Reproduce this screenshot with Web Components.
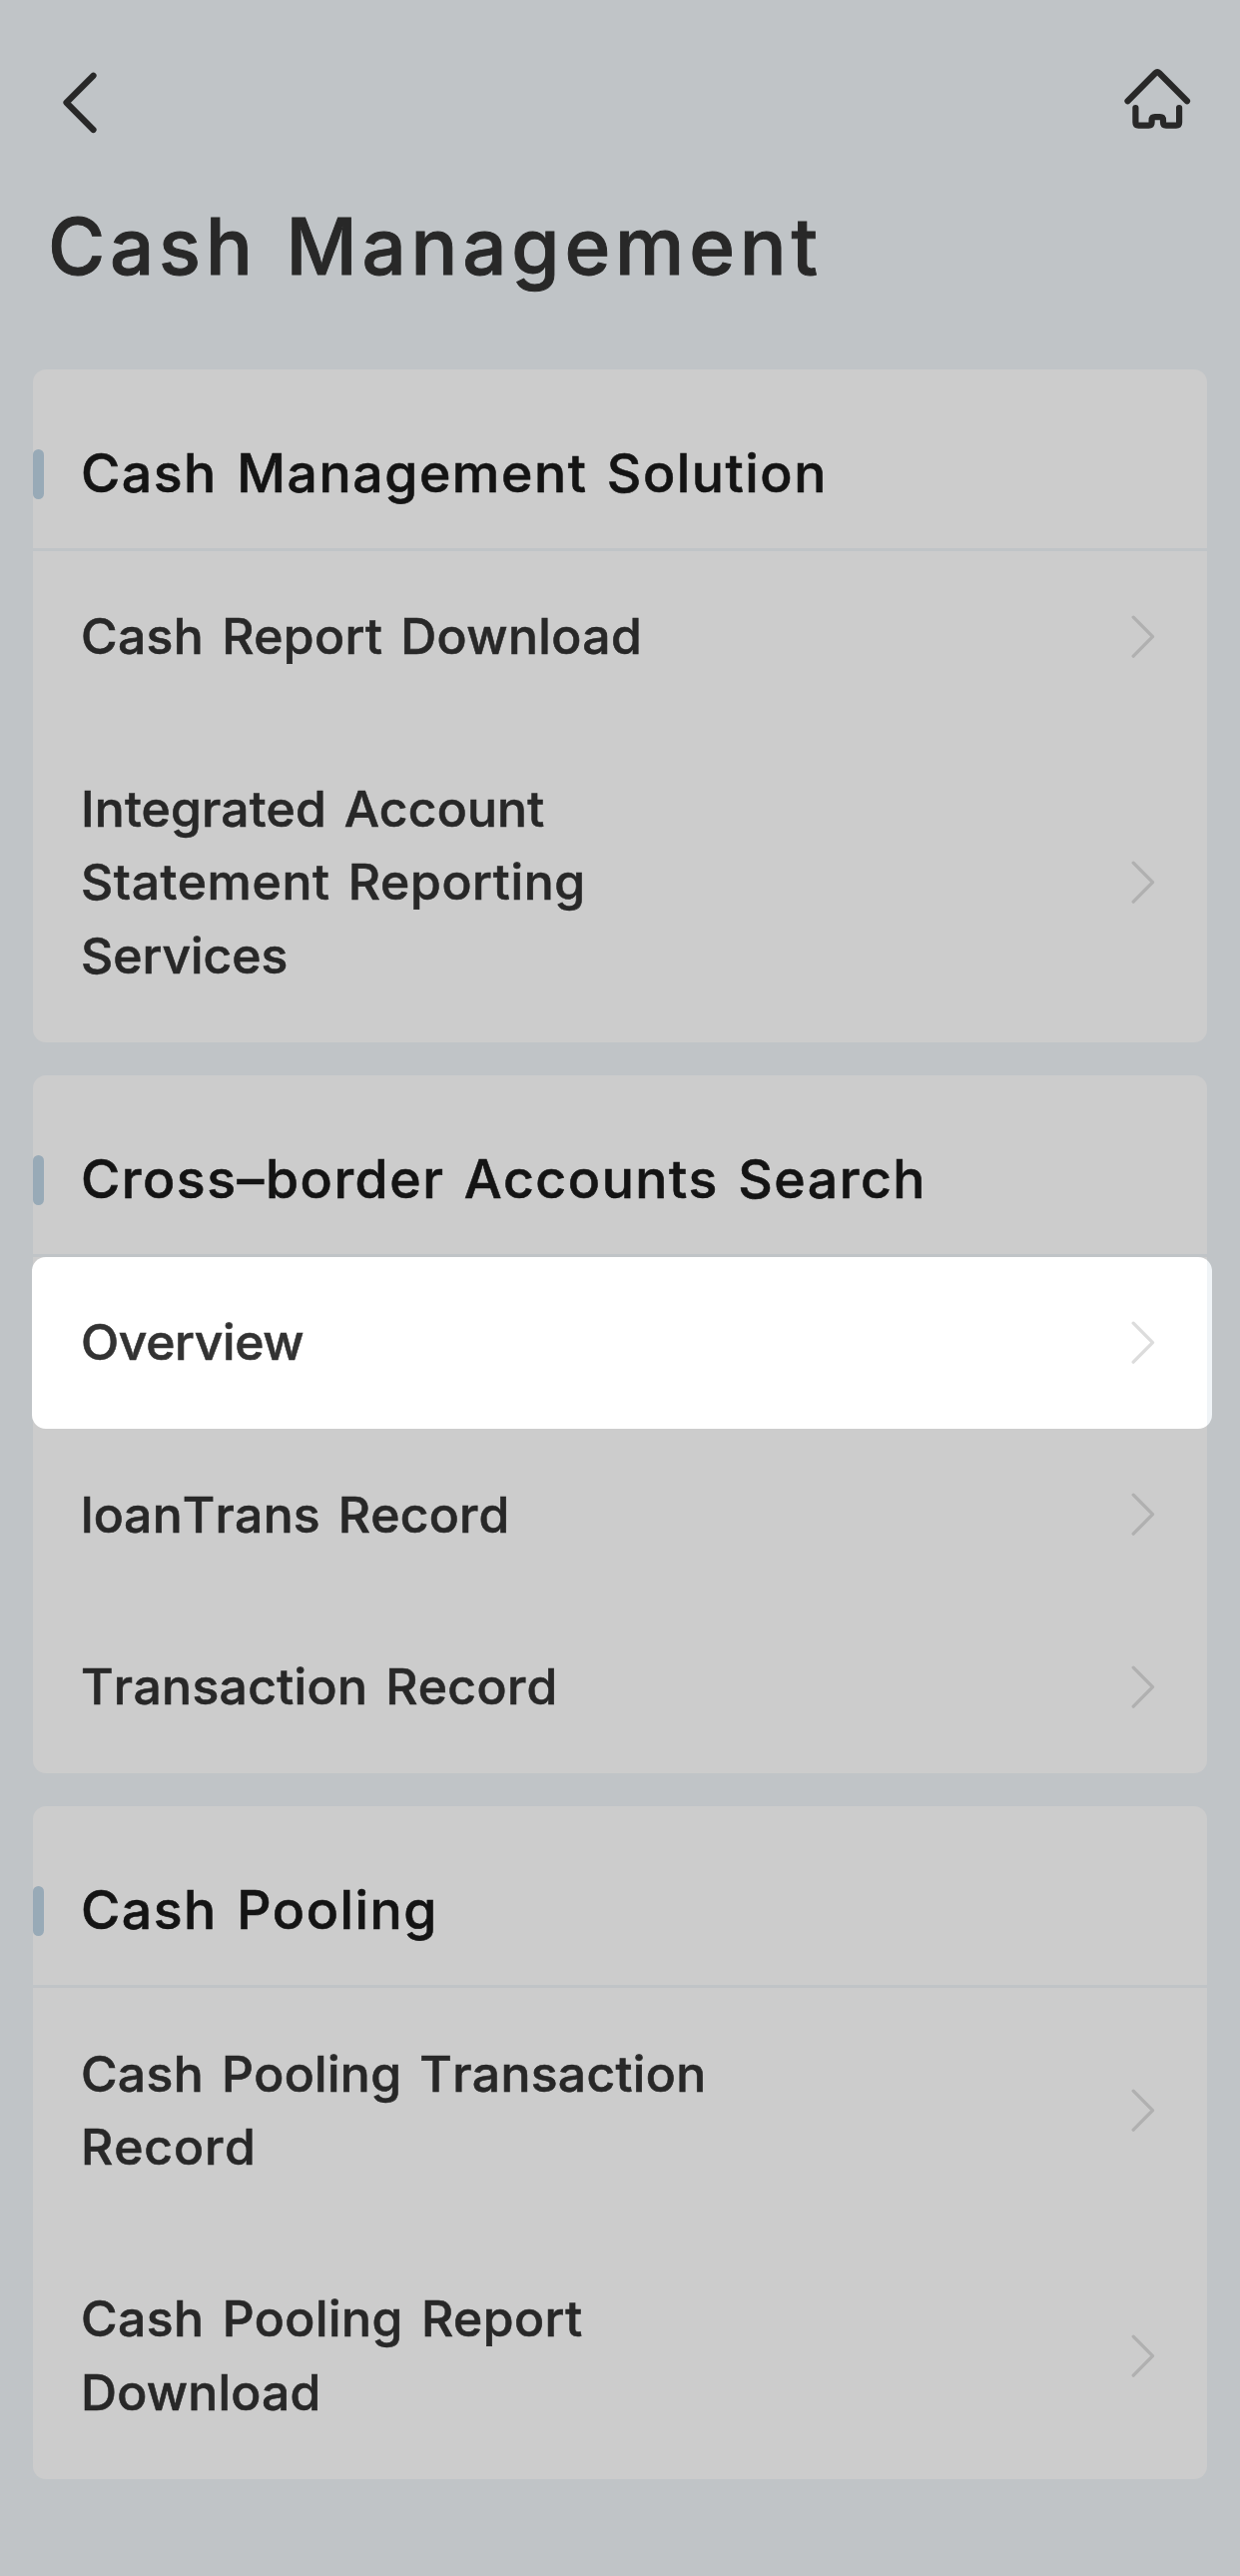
<!DOCTYPE html>
<html lang="en">
<head>
<meta charset="utf-8">
<title>Cash Management</title>
<style>
  html, body { margin: 0; background: #c0c4c7; }
  body { font-family: Inter, "Liberation Sans", Arial, sans-serif; color: #282828; }
</style>
</head>
<body>
<cash-page>
  <nav-bar slot="nav"></nav-bar>
  <page-title slot="title">Cash Management</page-title>
  <menu-card heading="Cash Management Solution">
    <menu-row>Cash Report Download</menu-row>
    <menu-row style="--ls:.2px">Integrated Account<br><span style="letter-spacing:.65px">Statement Reporting</span><br><span style="letter-spacing:0">Services</span></menu-row>
  </menu-card>
  <menu-card heading="Cross–border Accounts Search">
    <menu-row active style="--ls:-.35px">Overview</menu-row>
    <menu-row style="--ls:.25px;--kern:none">loanTrans Record</menu-row>
    <menu-row style="--ls:.35px;--kern:none">Transaction Record</menu-row>
  </menu-card>
  <menu-card heading="Cash Pooling">
    <menu-row style="--ls:.35px;--kern:none">Cash Pooling Transaction<br><span style="letter-spacing:.9px">Record</span></menu-row>
    <menu-row style="--ls:.5px">Cash Pooling Report<br><span style="letter-spacing:.25px">Download</span></menu-row>
  </menu-card>
</cash-page>
<script>
const define = (name, html) => customElements.define(name, class extends HTMLElement {
  constructor() {
    super();
    this.attachShadow({ mode: 'open' }).innerHTML = html;
    const h = this.shadowRoot.querySelector('h2');
    if (h) h.textContent = this.getAttribute('heading');
  }
});

define('nav-bar', `<style>
  :host { display: flex; justify-content: space-between; align-items: flex-start; height: 200px; padding: 61px 41px 0 51px; box-sizing: border-box; }
  svg { display: block; fill: none; stroke: #282828; stroke-width: 6.2; stroke-linecap: round; stroke-linejoin: round; }
</style>
<svg width="60" height="80" viewBox="51 61 60 80"><path d="M93.5 75.8 66.5 102.8 93.5 130"/></svg>
<svg width="84" height="80" viewBox="1117 61 84 80"><path d="M1129.5 101.3 1157.2 73.2Q1159.2 71.2 1161.2 73.2L1189 101.3"/><path d="M1137.4 108V122.5Q1137.4 125.6 1140.5 125.6H1150.5Q1153.6 125.6 1153.6 122.5V120.5Q1153.6 117.2 1156.8 117.2H1161.8Q1165 117.2 1165 120.5V122.5Q1165 125.6 1168.1 125.6H1178Q1181.1 125.6 1181.1 122.5V108"/></svg>`);

define('page-title', `<style>
  :host { display: block; height: 169.6px; padding-left: 48px; box-sizing: border-box; }
  h1 { margin: 0; font-size: 78px; font-weight: 500; line-height: 94px; letter-spacing: 4.8px; word-spacing: 3.2px; white-space: nowrap; -webkit-text-stroke: .9px currentColor; }
</style><h1><slot></slot></h1>`);

define('menu-card', `<style>
  :host { display: block; background: #ccc; border-radius: 13px; }
  header { display: flex; align-items: center; gap: 37px; height: 182.5px; padding-top: 31.4px; border-bottom: 3px solid #c0c4c7; box-sizing: border-box; }
  i { width: 11px; height: 50px; border-radius: 5.5px; background: #98aab7; }
  h2 { margin: -2px 0 0; font-size: 53.5px; font-weight: 500; line-height: 72px; letter-spacing: 1.55px; word-spacing: 3.6px; color: #141414; white-space: nowrap; -webkit-text-stroke: .6px currentColor; }
</style><header><i></i><h2></h2></header><slot></slot>`);

define('menu-row', `<style>
  :host { display: flex; justify-content: space-between; align-items: center; padding: 49.3px 51px 49.6px 48px; box-sizing: border-box; color: #282828; --chev: #b0b0b0; }
  :host([active]) { margin: 0 -5px 0 -1px; padding-left: 49px; padding-right: 56px; border-radius: 14px; background: linear-gradient(to left, #f0f4f7 5px, #fff 5px); color: #333; --chev: #dcdcdc; }
  .label { font-size: 49.8px; font-weight: 500; line-height: 73.4px; letter-spacing: var(--ls, .4px); word-spacing: 4.3px; font-kerning: var(--kern, normal); white-space: nowrap; -webkit-text-stroke: .6px currentColor; }
  svg { display: block; fill: none; stroke: var(--chev); stroke-width: 3.3; stroke-linecap: round; stroke-linejoin: round; }
</style><div class="label"><slot></slot></div>
<svg width="26" height="44" viewBox="0 0 26 44"><path d="M3.2 2.2 22.5 21.7 3.2 41.2"/></svg>`);

define('cash-page', `<style>
  :host { display: block; width: 1242px; height: 2580px; overflow: hidden; background: #c0c4c7; }
  main { display: flex; flex-direction: column; gap: 33px; padding: 0 32.7px 0 33px; }
</style><slot name="nav"></slot><slot name="title"></slot><main><slot></slot></main>`);
</script>
</body>
</html>
